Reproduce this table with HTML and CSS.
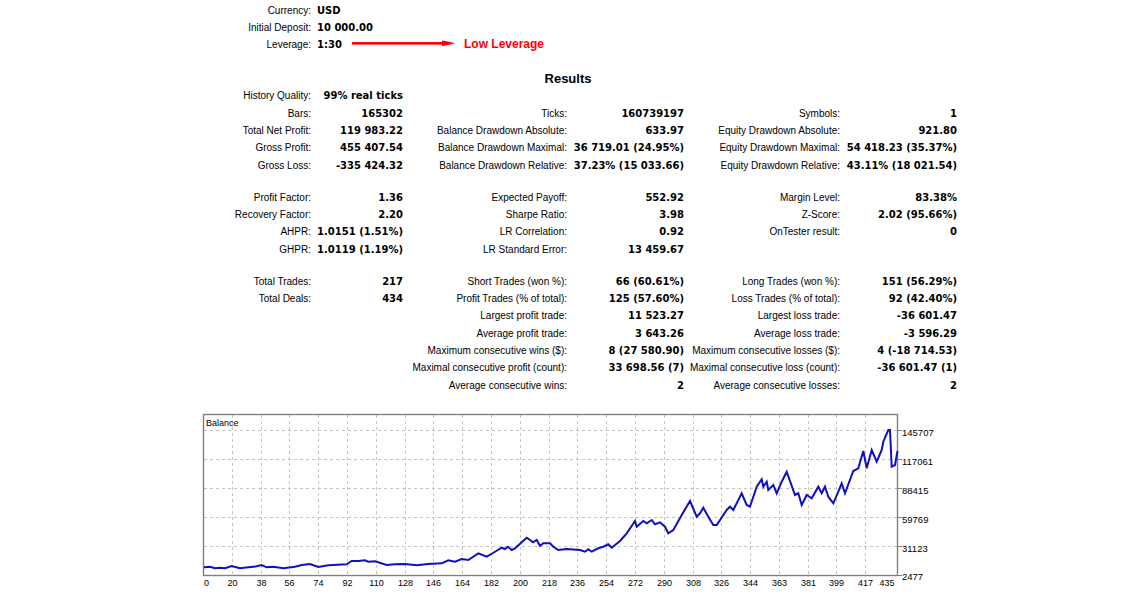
FILE: index.html
```html
<!DOCTYPE html>
<html>
<head>
<meta charset="utf-8">
<title>Strategy Tester Report</title>
<link rel="stylesheet" href="styles.css">
</head>
<body>
<div class="report">
  <div class="info">
    <div class="info-row"><div class="lbl">Currency:</div><div class="val">USD</div></div>
    <div class="info-row"><div class="lbl">Initial Deposit:</div><div class="val">10 000.00</div></div>
    <div class="info-row"><div class="lbl">Leverage:</div><div class="val lev"><span class="lev-v">1:30</span><svg class="arrow" width="104" height="17" viewBox="0 0 104 17"><rect x="0" y="6" width="94" height="2.6" fill="#ff0000"/><polygon points="90,4.5 96,5.5 103,7.3 96,9.1 90,10.1" fill="#ff0000"/></svg><span class="note">Low Leverage</span></div></div>
  </div>

  <div class="title">Results</div>

  <div class="stats">
    <div class="row"><div class="l">History Quality:</div><div class="v">99% real ticks</div><div></div><div></div><div></div><div></div></div>
    <div class="row"><div class="l">Bars:</div><div class="v">165302</div><div class="l">Ticks:</div><div class="v">160739197</div><div class="l">Symbols:</div><div class="v">1</div></div>
    <div class="row"><div class="l">Total Net Profit:</div><div class="v">119 983.22</div><div class="l">Balance Drawdown Absolute:</div><div class="v">633.97</div><div class="l">Equity Drawdown Absolute:</div><div class="v">921.80</div></div>
    <div class="row"><div class="l">Gross Profit:</div><div class="v">455 407.54</div><div class="l">Balance Drawdown Maximal:</div><div class="v">36 719.01 (24.95%)</div><div class="l">Equity Drawdown Maximal:</div><div class="v">54 418.23 (35.37%)</div></div>
    <div class="row"><div class="l">Gross Loss:</div><div class="v">-335 424.32</div><div class="l">Balance Drawdown Relative:</div><div class="v">37.23% (15 033.66)</div><div class="l">Equity Drawdown Relative:</div><div class="v">43.11% (18 021.54)</div></div>
    <div class="spacer"></div>
    <div class="row"><div class="l">Profit Factor:</div><div class="v">1.36</div><div class="l">Expected Payoff:</div><div class="v">552.92</div><div class="l">Margin Level:</div><div class="v">83.38%</div></div>
    <div class="row"><div class="l">Recovery Factor:</div><div class="v">2.20</div><div class="l">Sharpe Ratio:</div><div class="v">3.98</div><div class="l">Z-Score:</div><div class="v">2.02 (95.66%)</div></div>
    <div class="row"><div class="l">AHPR:</div><div class="v">1.0151 (1.51%)</div><div class="l">LR Correlation:</div><div class="v">0.92</div><div class="l">OnTester result:</div><div class="v">0</div></div>
    <div class="row"><div class="l">GHPR:</div><div class="v">1.0119 (1.19%)</div><div class="l">LR Standard Error:</div><div class="v">13 459.67</div><div></div><div></div></div>
    <div class="spacer"></div>
    <div class="row"><div class="l">Total Trades:</div><div class="v">217</div><div class="l">Short Trades (won %):</div><div class="v">66 (60.61%)</div><div class="l">Long Trades (won %):</div><div class="v">151 (56.29%)</div></div>
    <div class="row"><div class="l">Total Deals:</div><div class="v">434</div><div class="l">Profit Trades (% of total):</div><div class="v">125 (57.60%)</div><div class="l">Loss Trades (% of total):</div><div class="v">92 (42.40%)</div></div>
    <div class="row"><div></div><div></div><div class="l">Largest profit trade:</div><div class="v">11 523.27</div><div class="l">Largest loss trade:</div><div class="v">-36 601.47</div></div>
    <div class="row"><div></div><div></div><div class="l">Average profit trade:</div><div class="v">3 643.26</div><div class="l">Average loss trade:</div><div class="v">-3 596.29</div></div>
    <div class="row"><div></div><div></div><div class="l">Maximum consecutive wins ($):</div><div class="v">8 (27 580.90)</div><div class="l">Maximum consecutive losses ($):</div><div class="v">4 (-18 714.53)</div></div>
    <div class="row"><div></div><div></div><div class="l">Maximal consecutive profit (count):</div><div class="v">33 698.56 (7)</div><div class="l">Maximal consecutive loss (count):</div><div class="v">-36 601.47 (1)</div></div>
    <div class="row"><div></div><div></div><div class="l">Average consecutive wins:</div><div class="v">2</div><div class="l">Average consecutive losses:</div><div class="v">2</div></div>
  </div>

  <svg class="chart" width="740" height="183" viewBox="200 410 740 183">
    <rect x="203.5" y="414.5" width="694" height="161" fill="#ffffff"/>
    <g class="grid">
      <line x1="204" y1="430.5" x2="898" y2="430.5"/>
      <line x1="204" y1="459.5" x2="898" y2="459.5"/>
      <line x1="204" y1="488.5" x2="898" y2="488.5"/>
      <line x1="204" y1="517.5" x2="898" y2="517.5"/>
      <line x1="204" y1="546.5" x2="898" y2="546.5"/>
      <line x1="232.5" y1="415" x2="232.5" y2="575"/>
      <line x1="261.5" y1="415" x2="261.5" y2="575"/>
      <line x1="289.5" y1="415" x2="289.5" y2="575"/>
      <line x1="318.5" y1="415" x2="318.5" y2="575"/>
      <line x1="347.5" y1="415" x2="347.5" y2="575"/>
      <line x1="376.5" y1="415" x2="376.5" y2="575"/>
      <line x1="405.5" y1="415" x2="405.5" y2="575"/>
      <line x1="433.5" y1="415" x2="433.5" y2="575"/>
      <line x1="462.5" y1="415" x2="462.5" y2="575"/>
      <line x1="491.5" y1="415" x2="491.5" y2="575"/>
      <line x1="520.5" y1="415" x2="520.5" y2="575"/>
      <line x1="549.5" y1="415" x2="549.5" y2="575"/>
      <line x1="577.5" y1="415" x2="577.5" y2="575"/>
      <line x1="606.5" y1="415" x2="606.5" y2="575"/>
      <line x1="635.5" y1="415" x2="635.5" y2="575"/>
      <line x1="664.5" y1="415" x2="664.5" y2="575"/>
      <line x1="693.5" y1="415" x2="693.5" y2="575"/>
      <line x1="721.5" y1="415" x2="721.5" y2="575"/>
      <line x1="750.5" y1="415" x2="750.5" y2="575"/>
      <line x1="779.5" y1="415" x2="779.5" y2="575"/>
      <line x1="808.5" y1="415" x2="808.5" y2="575"/>
      <line x1="836.5" y1="415" x2="836.5" y2="575"/>
      <line x1="865.5" y1="415" x2="865.5" y2="575"/>
    </g>
    <g class="ticks">
      <line x1="898" y1="430.5" x2="902" y2="430.5"/>
      <line x1="898" y1="459.5" x2="902" y2="459.5"/>
      <line x1="898" y1="488.5" x2="902" y2="488.5"/>
      <line x1="898" y1="517.5" x2="902" y2="517.5"/>
      <line x1="898" y1="546.5" x2="902" y2="546.5"/>
      <line x1="898" y1="575.5" x2="902" y2="575.5"/>
    </g>
    <rect class="frame" x="203.5" y="414.5" width="694" height="161"/>
    <text class="ctext" x="206" y="425.5">Balance</text>
    <polyline class="bal" points="204,567 205,567.3 210,566.7 215,568.3 220,567.7 225,568.3 231.7,566 240,568.3 248.3,567.3 256.7,566.3 261.7,565 266.7,567.3 273.3,566.7 283.3,568.3 295,566.7 301.7,565 310,564 318.3,567 328.3,565.3 346.7,564.3 351.7,561 358.3,561 365,560.3 368.3,561.7 375,561.3 386.7,565 395,564.3 405,564 416.7,565.3 428.3,564 441.7,563.3 448.3,560.3 455,561.7 461.7,559 468.3,560 478.3,553.3 486.7,556.7 493,553 501.7,547.7 505,549 508,546.7 511.7,550 515,548.3 526.7,537.7 530,540 533,542.3 536.7,540 540,545.7 543.3,543.3 550,543.3 553.3,546.7 558.3,550 566.7,549 580,550 585,551.7 588.3,549.3 591.7,551.7 598.3,548.3 603.3,546.7 608.3,544.3 611.7,547.7 620,541 626.7,533.3 635,521 636.7,526.7 643.3,521 646.7,523.3 651.7,520 655,524.3 660,522.3 665,526.7 668.3,533.3 673.3,530 681.7,515 690,501 696.7,516.7 700,513.3 703.3,507.7 708.3,516.7 713.3,525 716.7,525 726.7,510 730,506.7 733.3,510 741.7,493.3 746.7,505 750,506.7 756.7,486.7 761.7,479.3 763.3,486.7 766.7,481.7 768.3,490 773.3,485 776.7,493.3 781.7,481.7 786.7,471.7 795,495 798.3,493.3 801.7,505 806.7,495 811.7,498.3 818.3,486.7 821.7,493.3 825,486.7 828.3,496.7 833.3,503.3 838.3,491.7 841.7,483.3 845,493.3 853.3,471 858.3,468.3 863.3,451 866.7,468.3 871.7,450 876.7,461.7 881.7,450 883.3,441.7 888.3,430 890,430 891.7,466.7 895,465 897.5,451"/>
    <g class="ctext ylab">
      <text x="902" y="435.5">145707</text>
      <text x="902" y="464.5">117061</text>
      <text x="902" y="493.5">88415</text>
      <text x="902" y="522.5">59769</text>
      <text x="902" y="551.5">31123</text>
      <text x="902" y="580">2477</text>
    </g>
    <g class="ctext xlab">
      <text x="204" y="586" class="first">0</text>
      <text x="232.5" y="586">20</text>
      <text x="261.5" y="586">38</text>
      <text x="289.5" y="586">56</text>
      <text x="318.5" y="586">74</text>
      <text x="347.5" y="586">92</text>
      <text x="376.5" y="586">110</text>
      <text x="405.5" y="586">128</text>
      <text x="433.5" y="586">146</text>
      <text x="462.5" y="586">164</text>
      <text x="491.5" y="586">182</text>
      <text x="520.5" y="586">200</text>
      <text x="549.5" y="586">218</text>
      <text x="577.5" y="586">236</text>
      <text x="606.5" y="586">254</text>
      <text x="635.5" y="586">272</text>
      <text x="664.5" y="586">290</text>
      <text x="693.5" y="586">308</text>
      <text x="721.5" y="586">326</text>
      <text x="750.5" y="586">344</text>
      <text x="779.5" y="586">363</text>
      <text x="808.5" y="586">381</text>
      <text x="836.5" y="586">399</text>
      <text x="865.5" y="586">417</text>
      <text x="887" y="586">435</text>
    </g>
  </svg>
</div>
</body>
</html>
```

FILE: styles.css
```css
html, body {
  margin: 0;
  padding: 0;
  background: #ffffff;
}

body {
  font-family: "Liberation Sans", Arial, sans-serif;
  font-size: 10px;
  color: #000000;
}

.report {
  padding-top: 1.5px;
}

.info {
  margin-left: 200px;
}

.info-row {
  display: grid;
  grid-template-columns: 112px 1fr;
  column-gap: 5px;
  height: 17px;
  line-height: 17px;
}

.lbl {
  text-align: right;
  padding-right: 1px;
  white-space: nowrap;
}

.val {
  font-family: "DejaVu Sans", Verdana, sans-serif;
  font-weight: bold;
  white-space: nowrap;
}

.lev {
  display: flex;
  align-items: center;
}

.lev-v {
  width: 35px;
}

.arrow {
  display: block;
  flex: none;
}

.note {
  margin-left: 8px;
  font-family: "Liberation Sans", Arial, sans-serif;
  font-size: 12px;
  font-weight: bold;
  color: #ff0000;
}

.title {
  margin: 17px 0 0 200px;
  width: 736px;
  height: 17px;
  line-height: 17px;
  text-align: center;
  font-family: "Liberation Sans", Arial, sans-serif;
  font-size: 13px;
  font-weight: bold;
}

.stats {
  margin: 0.8px 0 0 200px;
}

.row {
  display: grid;
  grid-template-columns: 112px 92px 164px 117px 156px 117px;
  height: 17.33px;
  line-height: 17.33px;
}

.l {
  text-align: right;
  padding-right: 1px;
  white-space: nowrap;
}

.v {
  text-align: right;
  padding-right: 1px;
  white-space: nowrap;
  font-family: "DejaVu Sans", Verdana, sans-serif;
  font-weight: bold;
}

.spacer {
  height: 14.67px;
}

.chart {
  display: block;
  margin: 16px 0 0 200px;
}

.grid line {
  stroke: #c4c4c4;
  stroke-width: 1;
  stroke-dasharray: 3 3;
}

.ticks line {
  stroke: #808080;
  stroke-width: 1;
}

.frame {
  fill: none;
  stroke: #808080;
  stroke-width: 1.4;
}

.bal {
  fill: none;
  stroke: #1010c0;
  stroke-width: 2;
  stroke-linejoin: miter;
}

.ctext {
  font-family: "Liberation Sans", Arial, sans-serif;
  font-size: 9px;
  fill: #000000;
}

.ylab {
  font-size: 9.5px;
}

.xlab text {
  text-anchor: middle;
}

.xlab .first {
  text-anchor: start;
}
```
